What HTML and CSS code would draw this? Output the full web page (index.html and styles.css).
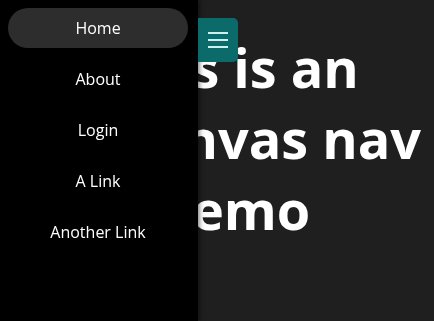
FILE: index.html
```html
<!DOCTYPE html>
<html lang="en">
<head>
  <meta charset="UTF-8">
  <meta name="viewport" content="width=device-width, initial-scale=1.0">
  <title>Offcanvas nav demo</title>
  <link rel="stylesheet" href="styles.css">
</head>
<body>
  <!-- боковое меню -->
  <nav class="offcanvas">
    <a href="#" class="nav-link active">Home</a>
    <a href="#" class="nav-link">About</a>
    <a href="#" class="nav-link">Login</a>
    <a href="#" class="nav-link">A Link</a>
    <a href="#" class="nav-link">Another Link</a>
  </nav>

  <button class="menu-toggle" aria-label="Menu">
    <svg width="20" height="16" viewBox="0 0 20 16">
      <rect x="0" y="0" width="20" height="2" fill="#c9f1f1"/>
      <rect x="0" y="7" width="20" height="2" fill="#c9f1f1"/>
      <rect x="0" y="14" width="20" height="2" fill="#c9f1f1"/>
    </svg>
  </button>

  <main class="content">
    <h1>This is an offcanvas nav demo</h1>
  </main>
</body>
</html>
```

FILE: styles.css
```css
html,
body {
  height: 100%;
}

body {
  margin: 0;
  font-family: "Open Sans", "Noto Sans", sans-serif;
  background-color: #1f1f1f;
  color: #fff;
  overflow: hidden;
}

.offcanvas {
  position: fixed;
  top: 0;
  left: 0;
  bottom: 0;
  width: 198px;
  box-sizing: border-box;
  padding: 8px 10px 8px 8px;
  background: #000;
  box-shadow: 1px 0 5px rgba(0, 0, 0, 0.6);
  display: flex;
  flex-direction: column;
  gap: 11px;
  z-index: 2;
}

.nav-link {
  display: flex;
  align-items: center;
  justify-content: center;
  height: 40px;
  border-radius: 20px;
  color: #fff;
  text-decoration: none;
  font-size: 16px;
}

.nav-link.active {
  background-color: #2d2d2d;
}

.menu-toggle {
  position: fixed;
  top: 18px;
  left: 198px;
  width: 40px;
  height: 44px;
  padding: 0;
  border: none;
  border-radius: 0 5px 5px 0;
  background-color: #0b6b6b;
  display: flex;
  align-items: center;
  justify-content: center;
  cursor: pointer;
  z-index: 3;
}

.content {
  padding: 0 0 0 34px;
}

.content h1 {
  margin: 32px 0 0;
  font-size: 54px;
  line-height: 71px;
  font-weight: 700;
  text-align: center;
}
```
